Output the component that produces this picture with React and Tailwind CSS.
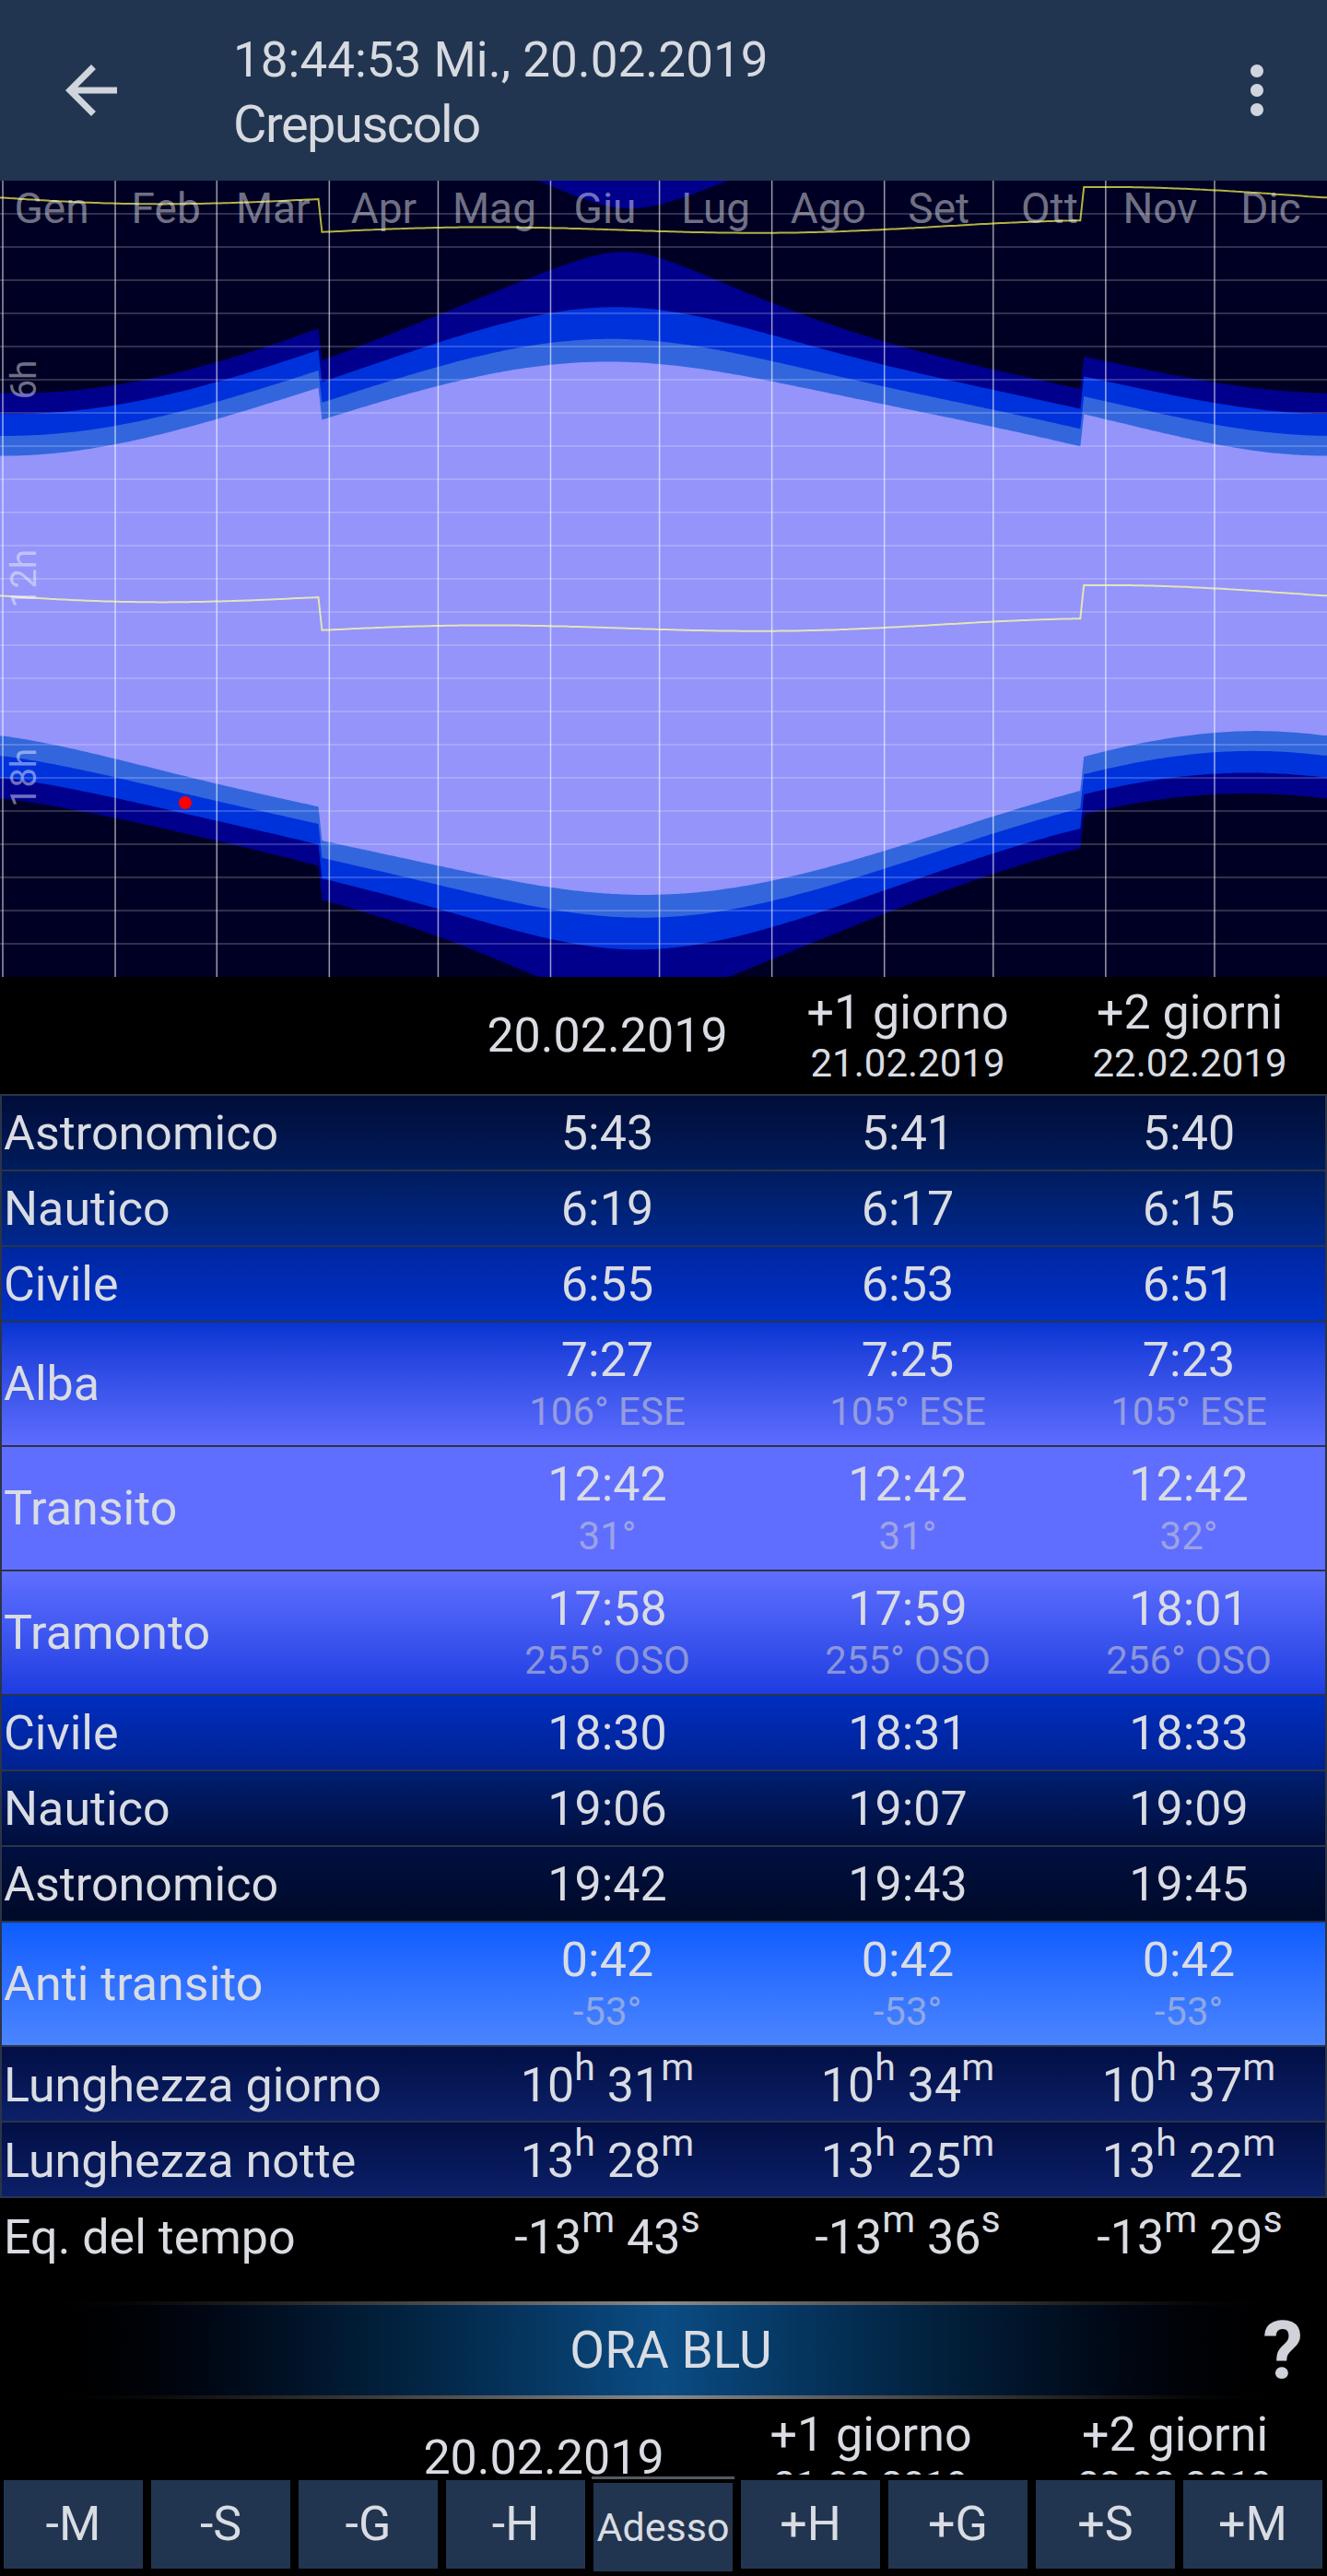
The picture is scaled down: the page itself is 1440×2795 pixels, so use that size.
import React from 'react';

// ---- sun data for the year chart ----
const LAT = 48.0;
const LON = 8.0;
const STEP = 3.937;
const HOUR = 36;
const CH = 864;
const MONTHS = ['Gen', 'Feb', 'Mar', 'Apr', 'Mag', 'Giu', 'Lug', 'Ago', 'Set', 'Ott', 'Nov', 'Dic'];
const MONTH_START = [0, 31, 59, 90, 120, 151, 181, 212, 243, 273, 304, 334, 365];

const DAYS = Array.from({ length: 365 }, (_, n) => {
  const g = (2 * Math.PI / 365) * n;
  const eot = 229.18 * (0.000075 + 0.001868 * Math.cos(g) - 0.032077 * Math.sin(g) - 0.014615 * Math.cos(2 * g) - 0.040849 * Math.sin(2 * g));
  const decl = 0.006918 - 0.399912 * Math.cos(g) + 0.070257 * Math.sin(g) - 0.006758 * Math.cos(2 * g) + 0.000907 * Math.sin(2 * g) - 0.002697 * Math.cos(3 * g) + 0.00148 * Math.sin(3 * g);
  const tz = n >= 88 && n <= 297 ? 2 : 1;
  return { n, decl, noon: 12 + tz - LON / 15 - eot / 60 };
});

const span = (d, h0) => {
  const lat = (LAT * Math.PI) / 180;
  const c = (Math.sin((h0 * Math.PI) / 180) - Math.sin(lat) * Math.sin(d.decl)) / (Math.cos(lat) * Math.cos(d.decl));
  if (c <= -1) return [d.noon - 12, d.noon + 12];
  if (c >= 1) return [d.noon, d.noon];
  const H = (Math.acos(c) * 180) / Math.PI / 15;
  return [d.noon - H, d.noon + H];
};

const clampH = (h) => Math.min(24, Math.max(0, h)) * HOUR;
const XS = [0, ...DAYS.map((d) => 1 + (d.n + 0.5) * STEP), 1440];
const pad = (a) => [a[0], ...a, a[a.length - 1]];

const band = (upper, lower) => {
  const U = pad(upper);
  const L = pad(lower);
  const pts = XS.map((x, i) => `${x.toFixed(1)},${U[i].toFixed(1)}`);
  for (let i = XS.length - 1; i >= 0; i--) pts.push(`${XS[i].toFixed(1)},${L[i].toFixed(1)}`);
  return pts.join(' ');
};

const line = (ys) => {
  const Y = pad(ys);
  return XS.map((x, i) => `${x.toFixed(1)},${Y[i].toFixed(1)}`).join(' ');
};

const LAYERS = [
  { h0: -18, fill: '#00008c' },
  { h0: -12, fill: '#0032dc' },
  { h0: -6, fill: '#3366dc' },
  { h0: -0.833, fill: '#9494fa' },
].map((l) => {
  const sp = DAYS.map((d) => span(d, l.h0));
  const polys = [band(sp.map((s) => clampH(s[0])), sp.map((s) => clampH(s[1])))];
  if (sp.some((s) => s[1] > 24)) polys.push(band(sp.map(() => 0), sp.map((s) => clampH(s[1] - 24))));
  if (sp.some((s) => s[0] < 0)) polys.push(band(sp.map((s) => clampH(s[0] + 24)), sp.map(() => CH)));
  return { ...l, polys };
});

const TRANSIT = line(DAYS.map((d) => d.noon * HOUR));
const ANTI = line(DAYS.map((d) => (d.noon - 12) * HOUR));

const YearChart = () => (
  <svg width="1440" height="864" viewBox="0 0 1440 864" className="block">
    <rect width="1440" height="864" fill="#000024" />
    {LAYERS.map((l) => l.polys.map((p, i) => <polygon key={`${l.h0}-${i}`} points={p} fill={l.fill} />))}
    {Array.from({ length: 23 }, (_, i) => (
      <line key={i} x1="0" x2="1440" y1={(i + 1) * HOUR} y2={(i + 1) * HOUR} stroke="#fff" strokeOpacity="0.25" strokeWidth="1.5" />
    ))}
    {MONTH_START.slice(0, 12).map((d) => (
      <line key={d} x1={3 + d * STEP} x2={3 + d * STEP} y1="0" y2="864" stroke="#fff" strokeOpacity="0.6" strokeWidth="1.5" />
    ))}
    <polyline points={ANTI} fill="none" stroke="#ffff50" strokeOpacity="0.7" strokeWidth="2" />
    <polyline points={TRANSIT} fill="none" stroke="#ffffa0" strokeOpacity="0.75" strokeWidth="2" />
    {MONTHS.map((m, i) => (
      <text key={m} x={(i === 0 ? -5 : 3) + ((MONTH_START[i] + MONTH_START[i + 1]) / 2) * STEP} y="46" textAnchor="middle" fontSize="46" fill="#fff" fillOpacity="0.45">
        {m}
      </text>
    ))}
    {[6, 12, 18].map((h) => (
      <text key={h} transform={`translate(39 ${h * HOUR}) rotate(-90)`} textAnchor="middle" fontSize="38" fill="#fff" fillOpacity="0.45">
        {h}h
      </text>
    ))}
    <circle cx={1 + (50 + 18.748 / 24) * STEP} cy={18.748 * HOUR} r="7" fill="#ff0000" />
  </svg>
);

// ---- table ----
const ROWS = [
  { label: 'Astronomico', vals: ['5:43', '5:41', '5:40'], bg: 'bg-linear-to-b from-[#000d38] to-[#001c5c]' },
  { label: 'Nautico', vals: ['6:19', '6:17', '6:15'], bg: 'bg-linear-to-b from-[#001c5e] to-[#00288e]' },
  { label: 'Civile', vals: ['6:55', '6:53', '6:51'], bg: 'bg-linear-to-b from-[#0026a0] to-[#0032c8]' },
  { label: 'Alba', vals: ['7:27', '7:25', '7:23'], subs: ['106° ESE', '105° ESE', '105° ESE'], bg: 'bg-linear-to-b from-[#0634d2] to-[#5e6cff]', tall: true },
  { label: 'Transito', vals: ['12:42', '12:42', '12:42'], subs: ['31°', '31°', '32°'], bg: 'bg-[#5f6eff]', tall: true },
  { label: 'Tramonto', vals: ['17:58', '17:59', '18:01'], subs: ['255° OSO', '255° OSO', '256° OSO'], bg: 'bg-linear-to-b from-[#5f6eff] to-[#1e3ce1]', tall: true },
  { label: 'Civile', vals: ['18:30', '18:31', '18:33'], bg: 'bg-linear-to-b from-[#002ec0] to-[#002290]' },
  { label: 'Nautico', vals: ['19:06', '19:07', '19:09'], bg: 'bg-linear-to-b from-[#001e70] to-[#000e3c]' },
  { label: 'Astronomico', vals: ['19:42', '19:43', '19:45'], bg: 'bg-linear-to-b from-[#000f40] to-[#000a28]' },
  { label: 'Anti transito', vals: ['0:42', '0:42', '0:42'], subs: ['-53°', '-53°', '-53°'], bg: 'bg-linear-to-b from-[#0c5cff] to-[#4a84ff]', tall: true },
  { label: 'Lunghezza giorno', sups: [[['10', 'h'], ['31', 'm']], [['10', 'h'], ['34', 'm']], [['10', 'h'], ['37', 'm']]], bg: 'bg-linear-to-b from-[#030f45] to-[#0c2068] pt-[3px]' },
  { label: 'Lunghezza notte', sups: [[['13', 'h'], ['28', 'm']], [['13', 'h'], ['25', 'm']], [['13', 'h'], ['22', 'm']]], bg: 'bg-linear-to-b from-[#030f45] to-[#0c2068] pt-[3px]' },
];

const Sup = ({ parts }) => (
  <span className="text-[52px] leading-[61px] whitespace-nowrap">
    {parts.map(([n, u], i) => (
      <React.Fragment key={i}>
        {i > 0 && ' '}
        {n}
        <span className="relative top-[-9px] align-top text-[41px] leading-none">{u}</span>
      </React.Fragment>
    ))}
  </span>
);

const Row = ({ row }) => (
  <div className={`grid grid-cols-[488px_338px_314px_296px] ${row.tall ? 'h-[135px]' : 'h-[82px]'} border-x-2 border-b-2 border-[#2b3447] ${row.bg}`}>
    <div className="flex items-center pl-[2px] text-[52px] leading-[61px] whitespace-nowrap">{row.label}</div>
    {[0, 1, 2].map((i) => (
      <div key={i} className="flex flex-col items-center justify-center">
        {row.sups ? (
          <Sup parts={row.sups[i]} />
        ) : (
          <span className="text-[52px] leading-[61px]">{row.vals[i]}</span>
        )}
        {row.subs && <span className="text-[42px] leading-[52px] text-[#c8c8d0]/60">{row.subs[i]}</span>}
      </div>
    ))}
  </div>
);

const HeadCell = ({ top, date }) => (
  <div className="flex flex-col items-center justify-center">
    <span className="text-[52px] leading-[61px] whitespace-nowrap">{top}</span>
    <span className="text-[42px] leading-[50px]">{date}</span>
  </div>
);

const TableHead = ({ cols }) => (
  <div className={`grid ${cols} h-[127px] bg-black`}>
    <div />
    <div className="flex items-center justify-center text-[52px] leading-[61px]">20.02.2019</div>
    <HeadCell top="+1 giorno" date="21.02.2019" />
    <HeadCell top="+2 giorni" date="22.02.2019" />
  </div>
);

const Header = () => (
  <div className="h-[196px] shrink-0 bg-[#223550] flex items-center text-[#d6dae0]">
    <svg width="84" height="84" viewBox="0 0 24 24" className="ml-[57px] shrink-0" fill="#d0d4dc">
      <path d="M20 11H7.83l5.59-5.59L12 4l-8 8 8 8 1.41-1.41L7.83 13H20v-2z" />
    </svg>
    <div className="ml-[112px] self-start pt-[34px] flex flex-col">
      <span className="text-[53px] leading-[62px] whitespace-nowrap">18:44:53 Mi., 20.02.2019</span>
      <span className="mt-[6px] text-[56px] leading-[66px] tracking-[-1.5px]">Crepuscolo</span>
    </div>
    <svg width="84" height="84" viewBox="0 0 24 24" className="ml-auto mr-[34px] shrink-0" fill="#d0d4dc">
      <path d="M12 8c1.1 0 2-.9 2-2s-.9-2-2-2-2 .9-2 2 .9 2 2 2zm0 2c-1.1 0-2 .9-2 2s.9 2 2 2 2-.9 2-2-.9-2-2-2zm0 6c-1.1 0-2 .9-2 2s.9 2 2 2 2-.9 2-2-.9-2-2-2z" />
    </svg>
  </div>
);

const OraBlu = () => (
  <div className="mt-[28px] h-[106px] flex flex-col">
    <div className="h-[4px] bg-linear-to-r from-black via-[#8a8a8a] to-black" />
    <div className="flex-1 grid grid-cols-[1fr_auto_1fr] items-center bg-linear-to-r from-black via-[#0b4c84] to-black">
      <div />
      <span className="text-[55px] leading-[64px] pl-[16px]">ORA BLU</span>
      <span className="justify-self-end pr-[26px] text-[88px] leading-[96px] font-bold text-[#cfd2d8]">?</span>
    </div>
    <div className="h-[4px] bg-linear-to-r from-black via-[#8a8a8a] to-black" />
  </div>
);

const BUTTONS = ['-M', '-S', '-G', '-H', 'Adesso', '+H', '+G', '+S', '+M'];

const BottomBar = () => (
  <div className="h-[110px] shrink-0 bg-black flex items-start gap-[9px] px-[4px]">
    {BUTTONS.map((b) =>
      b === 'Adesso' ? (
        <div key={b} className="w-[151px] shrink-0 flex flex-col">
          <div className="mt-[2px] -mx-[2px] h-[3px] bg-[#555a60]" />
          <div className="mt-[4px] h-[96px] bg-[#223550] flex items-center justify-center text-[43px]">Adesso</div>
        </div>
      ) : (
        <div key={b} className="mt-[6px] w-[151px] h-[96px] shrink-0 bg-[#223550] flex items-center justify-center text-[52px]">
          {b}
        </div>
      )
    )}
  </div>
);

export default function App() {
  return (
    <div className="w-[1440px] h-[2795px] flex flex-col overflow-hidden bg-black text-[#d9dce2] font-['Roboto',sans-serif]">
      <Header />
      <div className="flex-1 min-h-0 overflow-hidden">
        <YearChart />
        <TableHead cols="grid-cols-[490px_338px_314px_298px]" />
        <div className="h-[2px] bg-[#2b3447]" />
        {ROWS.map((r, i) => (
          <Row key={i} row={r} />
        ))}
        <div className="grid grid-cols-[490px_338px_314px_298px] h-[84px] bg-black">
          <div className="flex items-center pl-[4px] text-[52px] leading-[61px]">Eq. del tempo</div>
          {[[['-13', 'm'], ['43', 's']], [['-13', 'm'], ['36', 's']], [['-13', 'm'], ['29', 's']]].map((p, i) => (
            <div key={i} className="flex items-center justify-center">
              <Sup parts={p} />
            </div>
          ))}
        </div>
        <OraBlu />
        <TableHead cols="grid-cols-[400px_380px_330px_330px]" />
      </div>
      <BottomBar />
    </div>
  );
}
